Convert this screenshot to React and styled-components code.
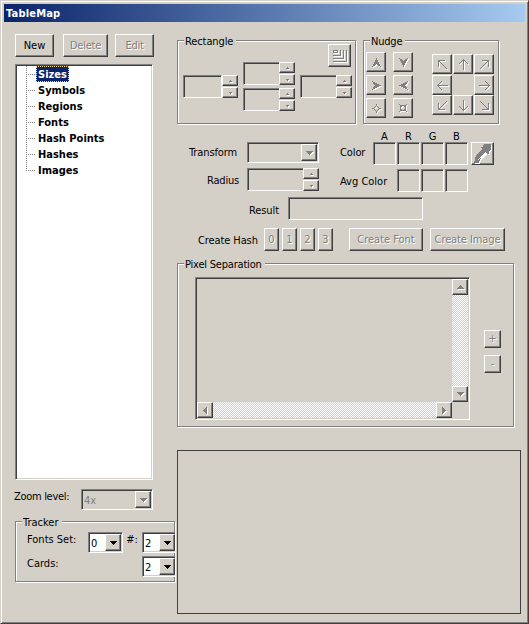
import React from "react";
import styled, { createGlobalStyle, css } from "styled-components";

const face = "#d4d0c8";
const shade = "#808080";
const dark = "#404040";
const navy = "#0a246a";

const GlobalStyle = createGlobalStyle`
  *, *::before, *::after { box-sizing: border-box; }
  body { margin: 0; background: ${face}; }
  button { margin: 0; padding: 0; font: inherit; }
`;

const raised = css`
  border: 1px solid;
  border-color: #fff ${dark} ${dark} #fff;
  box-shadow: inset -1px -1px 0 ${shade};
`;

const sunken = css`
  border: 1px solid;
  border-color: ${shade} #fff #fff ${shade};
  box-shadow: inset 1px 1px 0 ${dark};
`;

const Window = styled.main`
  width: 529px;
  height: 624px;
  overflow: hidden;
  background: ${face};
  border: 1px solid;
  border-color: ${face} ${dark} ${dark} ${face};
  box-shadow: inset 1px 1px 0 #fff, inset -1px -1px 0 ${shade};
  padding: 3px;
  font: 11px/14px "DejaVu Sans Condensed", "DejaVu Sans", sans-serif;
  color: #000;
`;

const TitleBar = styled.header`
  height: 18px;
  padding-left: 2px;
  background: linear-gradient(90deg, ${navy}, #a6caf0);
  color: #fff;
  font-weight: bold;
  line-height: 19px;
  letter-spacing: 0.2px;
`;

const Body = styled.div`
  display: flex;
`;

const LeftColumn = styled.div`
  width: 161px;
  margin-left: 11px;
  padding-top: 12px;
  flex: none;
`;

const RightColumn = styled.div`
  width: 344px;
  margin-left: 1px;
  padding-top: 18px;
  flex: none;
`;

const Row = styled.div`
  display: flex;
  align-items: flex-start;
  gap: ${(p) => p.$gap || 0}px;
  margin-top: ${(p) => p.$top || 0}px;
  margin-left: ${(p) => p.$left || 0}px;
  height: ${(p) => (p.$h ? `${p.$h}px` : "auto")};
`;

const Button = styled.button`
  ${raised}
  flex: none;
  display: flex;
  align-items: center;
  justify-content: center;
  width: ${(p) => p.$w}px;
  height: ${(p) => p.$h || 23}px;
  margin-left: ${(p) => p.$left || 0}px;
  background: ${face};
  color: #000;
  white-space: nowrap;
  letter-spacing: ${(p) => p.$track || 0}px;
  &:disabled {
    color: ${shade};
    text-shadow: 1px 1px 0 #fff;
  }
  &:disabled svg {
    filter: drop-shadow(1px 1px 0 #fff);
  }
`;

const Label = styled.span`
  flex: none;
  width: ${(p) => (p.$w ? `${p.$w}px` : "auto")};
  margin-top: ${(p) => p.$top ?? 1}px;
  white-space: nowrap;
  letter-spacing: ${(p) => p.$track || 0}px;
`;

const Tree = styled.ul`
  ${sunken}
  width: 138px;
  height: 416px;
  margin: 7px 0 0;
  padding: 1px 0 0 10px;
  background: #fff;
  box-shadow: inset 1px 1px 0 ${dark}, inset -1px -1px 0 ${face};
  list-style: none;
  font-weight: bold;
`;

const TreeItem = styled.li`
  display: flex;
  align-items: center;
  height: 16px;
  color: ${(p) => (p.$selected ? "#fff" : "#000")};
`;

const Branch = styled.svg`
  flex: none;
  width: 10px;
  height: 16px;
`;

const TreeText = styled.span`
  height: 16px;
  padding: 0 1px;
  border: 1px ${(p) => (p.$selected ? "dotted #f5db95" : "solid transparent")};
  background: ${(p) => (p.$selected ? navy : "transparent")};
  line-height: 16px;
  white-space: nowrap;
`;

const Field = styled.div`
  ${sunken}
  flex: none;
  width: ${(p) => p.$w}px;
  height: 23px;
  ${(p) => p.$open && "border-right: 0;"}
`;

const SpinStack = styled.div`
  display: grid;
  gap: 1px;
`;

const SpinField = styled.div`
  display: flex;
  flex: none;
`;

const ComboBox = styled.div`
  ${sunken}
  flex: none;
  display: flex;
  justify-content: space-between;
  width: ${(p) => p.$w}px;
  height: 21px;
  padding: 1px;
  background: ${(p) => (p.$disabled ? face : "#fff")};
  box-shadow: inset 1px 1px 0 ${dark}, inset -1px -1px 0 ${face};
  color: ${(p) => (p.$disabled ? shade : "#000")};
  ${(p) =>
    p.$clipped &&
    css`
      border-right: 0;
      padding-right: 0;
      box-shadow: inset 1px 1px 0 ${dark}, inset 0 -1px 0 ${face};
    `}
`;

const ComboText = styled.span`
  padding: 3px 0 0 1px;
`;

const Group = styled.fieldset`
  position: relative;
  flex: none;
  min-width: 0;
  margin: 0;
  padding: 0;
  width: ${(p) => p.$w}px;
  height: ${(p) => p.$h}px;
  border: 1px solid ${shade};
  box-shadow: inset 1px 1px 0 #fff, 1px 1px 0 #fff;
`;

const GroupTitle = styled.span`
  position: absolute;
  top: -6px;
  left: 6px;
  padding: 0 3px 0 1px;
  background: ${face};
  letter-spacing: ${(p) => p.$track || 0}px;
`;

const RectangleGrid = styled.div`
  display: grid;
  grid-template-columns: 60px 57px 52px;
  height: 83px;
  padding-left: 5px;
`;

const Stack = styled.div`
  display: flex;
  flex-direction: column;
  align-items: ${(p) => p.$align || "flex-start"};
  gap: ${(p) => p.$gap || 0}px;
  padding-top: ${(p) => p.$top || 0}px;
  margin-left: ${(p) => p.$left || 0}px;
`;

const NudgeGrid = styled.div`
  display: grid;
  grid-template-columns: repeat(2, 20px);
  grid-auto-rows: 20px;
  gap: 3px 7px;
`;

const CompassGrid = styled.div`
  display: grid;
  grid-template: 21px 20px 20px / repeat(3, 20px);
  column-gap: 1px;
  padding-top: 2px;
`;

const ColorLabels = styled.div`
  display: flex;
  flex-direction: column;
  gap: 14px;
  width: 33px;
  margin-left: 21px;
  padding-top: 16px;
`;

const ChannelGrid = styled.div`
  display: grid;
  grid-template: 13px 23px 23px / repeat(4, 23px);
  gap: 0 1px;
  text-align: center;
`;

const AverageRow = styled.div`
  grid-column: 2 / 5;
  display: flex;
  gap: 1px;
  margin-top: 4px;
`;

const ListBox = styled.div`
  ${sunken}
  flex: none;
  display: grid;
  grid-template: 123px 16px / 255px 16px;
  width: 275px;
  height: 143px;
  padding: 1px;
`;

const ListArea = styled.div``;

const ScrollBar = styled.div`
  display: flex;
  flex-direction: ${(p) => (p.$vertical ? "column" : "row")};
  justify-content: space-between;
  background: repeating-conic-gradient(#fff 0 25%, ${face} 0 50%) 0 0 / 2px 2px;
`;

const Preview = styled.section`
  width: 344px;
  height: 164px;
  margin-top: 23px;
  border: 1px solid ${dark};
`;

/* Icons are small bitmaps: one string per row, "#" for a filled pixel. */
const flipX = (rows) => rows.map((r) => [...r].reverse().join(""));
const flipY = (rows) => [...rows].reverse();
const transpose = (rows) => [...rows[0]].map((_, x) => rows.map((r) => r[x]).join(""));

const Bitmap = ({ rows }) => (
  <svg
    width={rows[0].length}
    height={rows.length}
    viewBox={`0 0 ${rows[0].length} ${rows.length}`}
    fill="currentColor"
    overflow="visible"
    shapeRendering="crispEdges"
  >
    <path
      d={rows
        .flatMap((r, y) => [...r].map((c, x) => (c === "#" ? `M${x} ${y}h1v1h-1z` : "")))
        .join("")}
    />
  </svg>
);

const triangle = ["#######", ".#####.", "..###..", "...#..."];
const smallTriangle = ["###", ".#."];
const diagonal = [
  "#######..",
  "##.......",
  "#.#......",
  "#..#.....",
  "#...#....",
  "#....#...",
  "#.....#..",
  ".......#.",
  "........#",
];
const upward = [
  "....#....",
  "...###...",
  "..#.#.#..",
  ".#..#..#.",
  "#...#...#",
  "....#....",
  "....#....",
  "....#....",
  "....#....",
  "....#....",
  "....#....",
];
const wedge = [
  "....#....",
  "....#....",
  "...###...",
  "...###...",
  "..#####..",
  "..#####..",
  ".###.###.",
  ".##...##.",
  "#.......#",
];
const star = [
  "....#....",
  "....#....",
  "...#.#...",
  "..#...#..",
  "##.....##",
  "..#...#..",
  "...#.#...",
  "....#....",
  "....#....",
];
const flared = [
  "#......#",
  ".######.",
  ".##..##.",
  ".#....#.",
  ".#....#.",
  ".##..##.",
  ".######.",
  "#......#",
];
const nested = [
  "#####..#..#..#",
  "#...#..#..#..#",
  "#####..#..#..#",
  ".......#..#..#",
  ".......#..#..#",
  "########..#..#",
  "..........#..#",
  "..........#..#",
  "###########..#",
  ".............#",
  ".............#",
  "##############",
];

const resizeIcons = [wedge, flipY(wedge), flipX(transpose(wedge)), transpose(wedge), star, flared];
const compassIcons = [
  diagonal, upward, flipX(diagonal),
  transpose(upward), null, flipX(transpose(upward)),
  flipY(diagonal), flipY(upward), flipX(flipY(diagonal)),
];

const Eyedropper = () => (
  <svg width="17" height="19" viewBox="0 0 17 19" fill="none" shapeRendering="crispEdges">
    <path d="M10 0h7v5l-2 2v3h-2l-1-1-6 6-1 4H0l1-4 1-4 6-6-1-1V3h2z" fill="currentColor" />
    <path d="M12 8.5l-8 7.5" stroke="#fff" strokeWidth="1.2" />
  </svg>
);

const Spinner = () => (
  <SpinStack>
    <Button $w={16} $h={11} disabled><Bitmap rows={flipY(smallTriangle)} /></Button>
    <Button $w={16} $h={11} disabled><Bitmap rows={smallTriangle} /></Button>
  </SpinStack>
);

const Spin = ({ w, closed }) => (
  <SpinField>
    <Field $w={w} $open={!closed} />
    <Spinner />
  </SpinField>
);

const Combo = ({ w, value, disabled, clipped }) => (
  <ComboBox $w={w} $disabled={disabled} $clipped={clipped}>
    <ComboText>{value}</ComboText>
    <Button $w={16} $h={17} disabled={disabled}><Bitmap rows={triangle} /></Button>
  </ComboBox>
);

const ScrollButton = ({ rows }) => (
  <Button $w={16} $h={16} disabled><Bitmap rows={rows} /></Button>
);

const branches = ["Sizes", "Symbols", "Regions", "Fonts", "Hash Points", "Hashes", "Images"];
const channels = ["A", "R", "G", "B"];

export default function App() {
  return (
    <>
      <GlobalStyle />
      <Window>
        <TitleBar>TableMap</TitleBar>
        <Body>
          <LeftColumn>
            <Row>
              <Button $w={39}>New</Button>
              <Button $w={45} $left={9} $track={-0.25} disabled>Delete</Button>
              <Button $w={39} $left={7} $track={-0.3} disabled>Edit</Button>
            </Row>
            <Tree>
              {branches.map((name, i) => (
                <TreeItem key={name} $selected={i === 0}>
                  <Branch viewBox="0 0 10 16" shapeRendering="crispEdges" stroke={shade} strokeDasharray="1 1">
                    <path d={i === branches.length - 1 ? "M.5 0v9" : "M.5 0v16"} />
                    <path d="M0 8.5h9" />
                  </Branch>
                  <TreeText $selected={i === 0}>{name}</TreeText>
                </TreeItem>
              ))}
            </Tree>
            <Row $top={9} $left={-1}>
              <Label $w={67} $track={-0.3}>Zoom level:</Label>
              <Combo w={72} value="4x" disabled />
            </Row>
            <Row $top={11}>
              <Group $w={160} $h={61}>
                <GroupTitle>Tracker</GroupTitle>
                <Row $top={10} $left={11}>
                  <Label $w={61}>Fonts Set:</Label>
                  <Combo w={35} value="0" />
                  <Label $w={19}>&nbsp;#:</Label>
                  <Combo w={33} value="2" clipped />
                </Row>
                <Row $top={3} $left={11}>
                  <Label $w={115}>Cards:</Label>
                  <Combo w={33} value="2" clipped />
                </Row>
              </Group>
            </Row>
          </LeftColumn>
          <RightColumn>
            <Row $gap={7}>
              <Group $w={179} $h={84}>
                <GroupTitle $track={-0.1}>Rectangle</GroupTitle>
                <RectangleGrid>
                  <Stack $top={34}><Spin w={39} closed /></Stack>
                  <Stack $top={21} $gap={3}><Spin w={36} /><Spin w={36} /></Stack>
                  <Stack $top={3} $gap={8} $align="center">
                    <Stack $left={27}><Button $w={23} disabled><Bitmap rows={nested} /></Button></Stack>
                    <Spin w={36} />
                  </Stack>
                </RectangleGrid>
              </Group>
              <Group $w={136} $h={84}>
                <GroupTitle $track={-0.2}>Nudge</GroupTitle>
                <Row $top={11} $left={2} $gap={19}>
                  <NudgeGrid>
                    {resizeIcons.map((rows, i) => (
                      <Button key={i} $w={20} $h={20} disabled><Bitmap rows={rows} /></Button>
                    ))}
                  </NudgeGrid>
                  <CompassGrid>
                    {compassIcons.map((rows, i) =>
                      rows ? (
                        <Button key={i} $w={20} $h={20} disabled><Bitmap rows={rows} /></Button>
                      ) : (
                        <span key={i} />
                      )
                    )}
                  </CompassGrid>
                </Row>
              </Group>
            </Row>
            <Row $top={5} $h={63}>
              <Stack $top={13} $gap={5}>
                <Row $left={12}>
                  <Label $w={58} $top={4} $track={-0.1}>Transform</Label>
                  <Combo w={72} disabled />
                </Row>
                <Row $left={30}>
                  <Label $w={40} $top={6} $track={-0.2}>Radius</Label>
                  <Spin w={56} />
                </Row>
              </Stack>
              <ColorLabels>
                <Label $track={-0.1}>Color</Label>
                <Label>Avg Color</Label>
              </ColorLabels>
              <ChannelGrid>
                {channels.map((c) => <Label key={c}>{c}</Label>)}
                {channels.map((c) => <Field key={c} $w={23} />)}
                <AverageRow>
                  {channels.slice(1).map((c) => <Field key={c} $w={23} />)}
                </AverageRow>
              </ChannelGrid>
              <Stack $top={13} $left={3}>
                <Button $w={23} disabled><Eyedropper /></Button>
              </Stack>
            </Row>
            <Row $top={5} $left={72}>
              <Label $w={39} $top={7} $track={-0.1}>Result</Label>
              <Field $w={135} />
            </Row>
            <Row $top={8} $left={21}>
              <Label $w={66} $top={6} $track={-0.1}>Create Hash</Label>
              <Row $gap={3}>
                {[0, 1, 2, 3].map((n) => <Button key={n} $w={15} disabled>{n}</Button>)}
              </Row>
              <Button $w={74} $left={16} disabled>Create Font</Button>
              <Button $w={75} $left={7} $track={-0.1} disabled>Create Image</Button>
            </Row>
            <Row $top={12}>
              <Group $w={337} $h={164}>
                <GroupTitle $track={-0.2}>Pixel Separation</GroupTitle>
                <Row $top={13} $left={17}>
                  <ListBox>
                    <ListArea />
                    <ScrollBar $vertical>
                      <ScrollButton rows={flipY(triangle)} />
                      <ScrollButton rows={triangle} />
                    </ScrollBar>
                    <ScrollBar>
                      <ScrollButton rows={transpose(flipY(triangle))} />
                      <ScrollButton rows={transpose(triangle)} />
                    </ScrollBar>
                  </ListBox>
                  <Stack $top={53} $left={14} $gap={7}>
                    <Button $w={17} $h={18} disabled>+</Button>
                    <Button $w={17} $h={18} disabled>-</Button>
                  </Stack>
                </Row>
              </Group>
            </Row>
            <Preview />
          </RightColumn>
        </Body>
      </Window>
    </>
  );
}
